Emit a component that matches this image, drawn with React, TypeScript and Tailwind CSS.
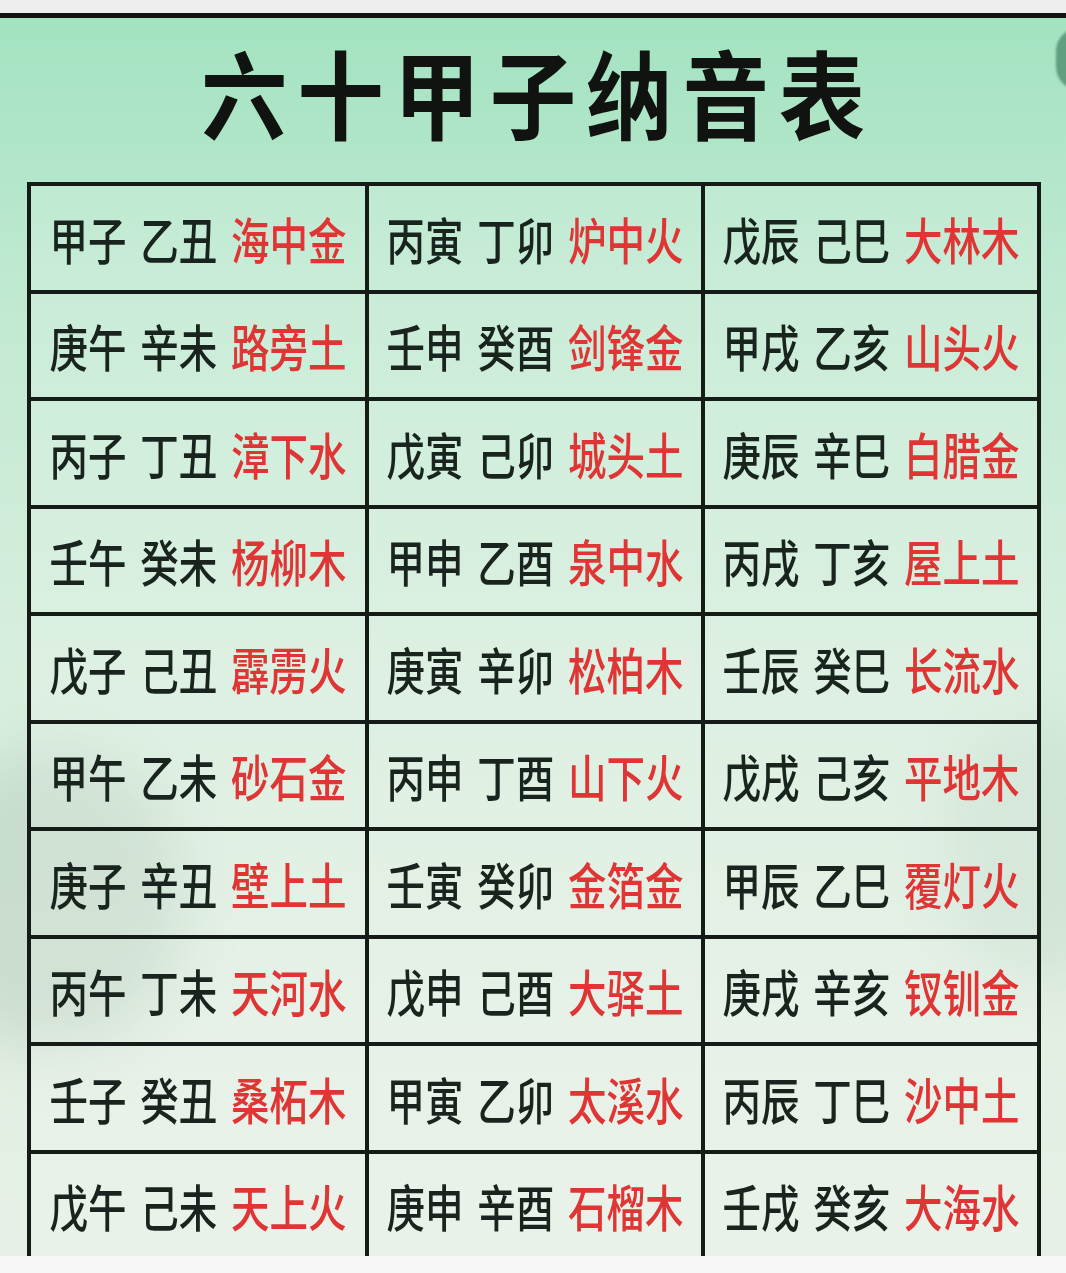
const rows: [string, string, string][][] = [
  [["甲子", "乙丑", "海中金"], ["丙寅", "丁卯", "炉中火"], ["戊辰", "己巳", "大林木"]],
  [["庚午", "辛未", "路旁土"], ["壬申", "癸酉", "剑锋金"], ["甲戌", "乙亥", "山头火"]],
  [["丙子", "丁丑", "漳下水"], ["戊寅", "己卯", "城头土"], ["庚辰", "辛巳", "白腊金"]],
  [["壬午", "癸未", "杨柳木"], ["甲申", "乙酉", "泉中水"], ["丙戌", "丁亥", "屋上土"]],
  [["戊子", "己丑", "霹雳火"], ["庚寅", "辛卯", "松柏木"], ["壬辰", "癸巳", "长流水"]],
  [["甲午", "乙未", "砂石金"], ["丙申", "丁酉", "山下火"], ["戊戌", "己亥", "平地木"]],
  [["庚子", "辛丑", "壁上土"], ["壬寅", "癸卯", "金箔金"], ["甲辰", "乙巳", "覆灯火"]],
  [["丙午", "丁未", "天河水"], ["戊申", "己酉", "大驿土"], ["庚戌", "辛亥", "钗钏金"]],
  [["壬子", "癸丑", "桑柘木"], ["甲寅", "乙卯", "太溪水"], ["丙辰", "丁巳", "沙中土"]],
  [["戊午", "己未", "天上火"], ["庚申", "辛酉", "石榴木"], ["壬戌", "癸亥", "大海水"]],
]

function Cell({ cell }: { cell: [string, string, string] }) {
  return (
    <div className="h-[107.5px] border-r-4 border-b-4 border-[#151b17] flex items-center justify-center bg-white/15">
      <div className="flex gap-[18px] scale-x-[0.77] whitespace-nowrap text-[50px] leading-none font-medium">
        <span className="text-[#18241d]">{cell[0]}</span>
        <span className="text-[#18241d]">{cell[1]}</span>
        <span className="text-[#df3535]">{cell[2]}</span>
      </div>
    </div>
  )
}

export default function App() {
  return (
    <div
      className="w-[1066px] h-[1273px] overflow-hidden flex flex-col bg-[#f6f6f6]"
      style={{ fontFamily: '"Noto Sans CJK SC", "Noto Sans", sans-serif' }}
    >
      <div className="h-[13px] bg-[#eeeeee]" />
      <div className="h-[5px] bg-[#111411]" />

      <div className="relative h-[1238px] overflow-hidden bg-[linear-gradient(180deg,#a2e3c0_0%,#c0e9d1_22%,#d6eedd_50%,#e2efe3_80%,#e6f0e6_100%)]">
        {/* decorations */}
        <div className="absolute right-[-36px] top-[10px] w-[46px] h-[62px] rounded-full bg-[#4f8d6f]/80 blur-[1px]" />
        <div className="absolute left-[-80px] top-[730px] w-[260px] h-[300px] rounded-full bg-[#a9c2b2]/40 blur-[30px]" />
        <div className="absolute right-[-60px] top-[700px] w-[180px] h-[260px] rounded-full bg-[#b8d0c0]/35 blur-[30px]" />

        <div className="relative mt-[25px] h-[96px] flex justify-center">
          <h1 className="scale-x-[0.9] whitespace-nowrap text-[96px] leading-none font-bold tracking-[11px] pl-[11px] text-[#101310]">
            六十甲子纳音表
          </h1>
        </div>

        <div className="relative mt-[43px] ml-[27px] w-[1014px] grid grid-cols-[338px_336px_336px] border-l-4 border-t-4 border-[#151b17]">
          {rows.map((row, i) =>
            row.map((cell, j) => <Cell key={`${i}-${j}`} cell={cell} />)
          )}
        </div>
      </div>

      <div className="flex-1 bg-[#f7f7f7]" />
    </div>
  )
}
